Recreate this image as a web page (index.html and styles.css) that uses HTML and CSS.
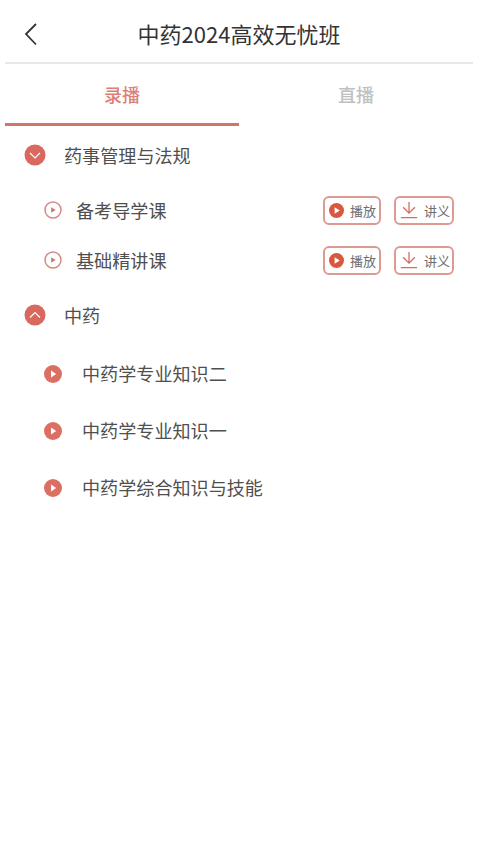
FILE: index.html
```html
<!DOCTYPE html>
<html lang="zh">
<head>
<meta charset="utf-8">
<title>中药2024高效无忧班</title>
<link rel="stylesheet" href="styles.css">
</head>
<body>
<div class="page">
  <header class="header">
    <svg class="back" viewBox="0 0 14 24" width="14" height="24"><path d="M12 2 2 12 12 22.5" fill="none" stroke="#333" stroke-width="1.8"/></svg>
    <h1 class="title">中药2024高效无忧班</h1>
  </header>
  <nav class="tabs">
    <div class="tab active">录播</div>
    <div class="tab">直播</div>
  </nav>
  <main class="list">
    <div class="section first">
      <svg class="s-icon" viewBox="0 0 22 22" width="22" height="22"><circle cx="11" cy="11" r="10.5" fill="#d9685f"/><path d="M6 9 11 14 16 9" fill="none" stroke="#fff" stroke-width="1.2"/></svg>
      <span>药事管理与法规</span>
    </div>
    <div class="course c1">
      <svg class="c-icon" viewBox="0 0 18 18" width="18" height="18"><circle cx="9" cy="9" r="8" fill="none" stroke="#d28a84" stroke-width="1.5"/><path d="M7.2 6.2 11.6 9l-4.4 2.8z" fill="#c9766e"/></svg>
      <span class="c-name">备考导学课</span>
      <button class="btn play"><svg viewBox="0 0 16 16" width="15" height="15"><circle cx="8" cy="8" r="8" fill="#d9573f"/><path d="M6 4.5 11.5 8 6 11.5z" fill="#fff"/></svg><span>播放</span></button>
      <button class="btn dl"><svg viewBox="0 0 20 20" width="18" height="18"><path d="M10 1v12M3.5 7 10 13.5 16.5 7M1 18.5h18" fill="none" stroke="#d9685f" stroke-width="1.4"/></svg><span>讲义</span></button>
    </div>
    <div class="course c2">
      <svg class="c-icon" viewBox="0 0 18 18" width="18" height="18"><circle cx="9" cy="9" r="8" fill="none" stroke="#d28a84" stroke-width="1.5"/><path d="M7.2 6.2 11.6 9l-4.4 2.8z" fill="#c9766e"/></svg>
      <span class="c-name">基础精讲课</span>
      <button class="btn play"><svg viewBox="0 0 16 16" width="15" height="15"><circle cx="8" cy="8" r="8" fill="#d9573f"/><path d="M6 4.5 11.5 8 6 11.5z" fill="#fff"/></svg><span>播放</span></button>
      <button class="btn dl"><svg viewBox="0 0 20 20" width="18" height="18"><path d="M10 1v12M3.5 7 10 13.5 16.5 7M1 18.5h18" fill="none" stroke="#d9685f" stroke-width="1.4"/></svg><span>讲义</span></button>
    </div>
    <div class="section second">
      <svg class="s-icon" viewBox="0 0 22 22" width="22" height="22"><circle cx="11" cy="11" r="10.5" fill="#d9685f"/><path d="M6 13.5 11 8.5 16 13.5" fill="none" stroke="#fff" stroke-width="1.2"/></svg>
      <span>中药</span>
    </div>
    <div class="subject">
      <svg class="p-icon" viewBox="0 0 18 18" width="18" height="18"><circle cx="9" cy="9" r="9" fill="#dc6f63"/><path d="M7 5.5 12.2 9 7 12.5z" fill="#fff"/></svg>
      <span>中药学专业知识二</span>
    </div>
    <div class="subject">
      <svg class="p-icon" viewBox="0 0 18 18" width="18" height="18"><circle cx="9" cy="9" r="9" fill="#dc6f63"/><path d="M7 5.5 12.2 9 7 12.5z" fill="#fff"/></svg>
      <span>中药学专业知识一</span>
    </div>
    <div class="subject">
      <svg class="p-icon" viewBox="0 0 18 18" width="18" height="18"><circle cx="9" cy="9" r="9" fill="#dc6f63"/><path d="M7 5.5 12.2 9 7 12.5z" fill="#fff"/></svg>
      <span>中药学综合知识与技能</span>
    </div>
  </main>
</div>
</body>
</html>
```
FILE: styles.css
```css
* { box-sizing: border-box; }
html, body { margin: 0; padding: 0; background: #fff; }
body {
  width: 478px;
  height: 850px;
  overflow: hidden;
  font-family: "Noto Sans CJK SC", "Noto Sans", sans-serif;
  color: #444;
}
.page { padding: 0 5px; height: 850px; }
.header {
  height: 64px;
  border-bottom: 2px solid #e8e8e8;
  display: flex;
  align-items: center;
  justify-content: center;
  position: relative;
  padding-top: 4px;
}
.back { position: absolute; left: 19px; top: 22px; }
.title { margin: 0; font-size: 22px; font-weight: 400; color: #333; line-height: 30px; }
.tabs { display: flex; height: 62px; }
.tab {
  width: 234px;
  height: 62px;
  font-size: 18px;
  line-height: 26px;
  padding-top: 17px;
  text-align: center;
  color: #c0c0c0;
  font-weight: 500;
}
.active { color: #dd8078; border-bottom: 3px solid #d4736a; }
.section, .course, .subject { display: flex; align-items: center; font-size: 18.1px; color: #4f4f4f; }
.section { height: 30px; padding-left: 19px; }
.s-icon { margin-right: 18px; flex: none; }
.first { margin-top: 14px; }
.second { margin-top: 25px; }
.course { height: 30px; padding-left: 39px; }
.c1 { margin-top: 25px; }
.c2 { margin-top: 20px; }
.c-icon { flex: none; margin-right: 14px; }
.c-name { flex: none; width: 247px; }
.btn {
  display: flex;
  align-items: center;
  height: 29px;
  padding: 0;
  background: #fff;
  border: 2px solid #dd9a93;
  border-radius: 6px;
  font: inherit;
  font-size: 13px;
  color: #6e6e6e;
}
.play { width: 58px; padding-left: 4px; gap: 6px; margin-right: 13px; }
.dl { width: 60px; padding-left: 4px; gap: 6px; }
.subject { height: 30px; padding-left: 39px; margin-top: 27px; }
.second + .subject { margin-top: 28px; }
.p-icon { flex: none; margin-right: 20px; margin-top: 2px; }
```
